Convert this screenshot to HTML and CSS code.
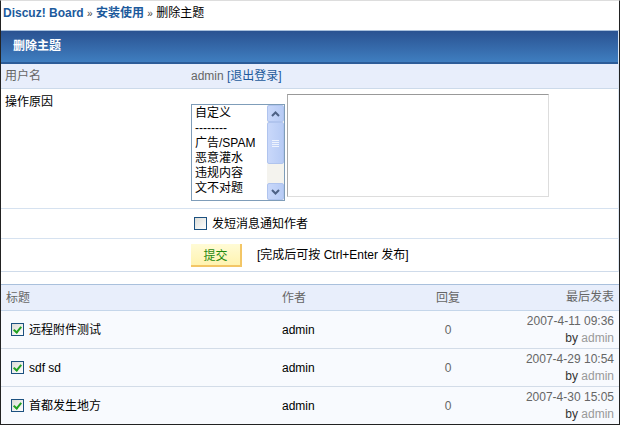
FILE: index.html
```html
<!DOCTYPE html>
<html lang="zh-CN">
<head>
    <meta charset="UTF-8">
    <title>删除主题 - Discuz! Board</title>
    <link rel="stylesheet" href="styles.css">
</head>
<body>
<div class="page">
    <div class="nav">
        <a href="#">Discuz! Board</a> <span class="sep">&raquo;</span> <a href="#">安装使用</a> <span class="sep">&raquo;</span> 删除主题
    </div>

    <div class="box">
        <h3 class="box-title">删除主题</h3>

        <div class="frow alt">
            <div class="flabel gray">用户名</div>
            <div class="fvalue gray">admin <a href="#">[退出登录]</a></div>
        </div>

        <div class="frow reason">
            <div class="flabel">操作原因</div>
            <div class="fvalue reason-fields">
                <div class="listbox">
                    <ul class="options">
                        <li>自定义</li>
                        <li>--------</li>
                        <li>广告/SPAM</li>
                        <li>恶意灌水</li>
                        <li>违规内容</li>
                        <li>文不对题</li>
                    </ul>
                    <div class="scroll">
                        <div class="sbtn">
                            <svg width="9" height="6" viewBox="0 0 9 6"><path d="M1 5 L4.5 1.5 L8 5" fill="none" stroke="#4d6185" stroke-width="2"/></svg>
                        </div>
                        <div class="thumb"><i></i><i></i><i></i><i></i></div>
                        <div class="track"></div>
                        <div class="sbtn">
                            <svg width="9" height="6" viewBox="0 0 9 6"><path d="M1 1 L4.5 4.5 L8 1" fill="none" stroke="#4d6185" stroke-width="2"/></svg>
                        </div>
                    </div>
                </div>
                <textarea class="reason-text"></textarea>
            </div>
        </div>

        <div class="frow check-row">
            <div class="flabel"></div>
            <label class="fvalue check-line">
                <svg class="cb" width="13" height="13" viewBox="0 0 13 13">
                    <defs><linearGradient id="cbg" x1="0" y1="0" x2="1" y2="1"><stop offset="0" stop-color="#dcdcd6"/><stop offset="1" stop-color="#ffffff"/></linearGradient></defs>
                    <rect x="0.5" y="0.5" width="12" height="12" fill="url(#cbg)" stroke="#1c5180"/>
                </svg>
                发短消息通知作者
            </label>
        </div>

        <div class="frow submit-row">
            <div class="flabel"></div>
            <div class="fvalue">
                <button class="btn" type="button">提交</button>
                <span class="hint">[完成后可按 Ctrl+Enter 发布]</span>
            </div>
        </div>
    </div>

    <table class="topics">
        <thead>
            <tr>
                <td class="c-title">标题</td>
                <td class="c-author">作者</td>
                <td class="c-reply">回复</td>
                <td class="c-last">最后发表</td>
            </tr>
        </thead>
        <tbody>
            <tr>
                <td class="c-title"><span class="ck"></span>远程附件测试</td>
                <td class="c-author">admin</td>
                <td class="c-reply">0</td>
                <td class="c-last">2007-4-11 09:36<br><span class="by">by <a href="#">admin</a></span></td>
            </tr>
            <tr>
                <td class="c-title"><span class="ck"></span>sdf sd</td>
                <td class="c-author">admin</td>
                <td class="c-reply">0</td>
                <td class="c-last">2007-4-29 10:54<br><span class="by">by <a href="#">admin</a></span></td>
            </tr>
            <tr>
                <td class="c-title"><span class="ck"></span>首都发生地方</td>
                <td class="c-author">admin</td>
                <td class="c-reply">0</td>
                <td class="c-last">2007-4-30 15:05<br><span class="by">by <a href="#">admin</a></span></td>
            </tr>
        </tbody>
    </table>
</div>
</body>
</html>
```

FILE: styles.css
```css
*{
    margin: 0;
    padding: 0;
    box-sizing: border-box;
}
body{
    font: 12px/16px "Liberation Sans", "Noto Sans CJK SC", sans-serif;
    color: #000;
    background: #fff;
}
a{
    color: #1c5a9c;
    text-decoration: none;
}
ul{
    list-style: none;
}
.page{
    width: 620px;
    height: 425px;
    border: 1px solid #222;
    border-top-color: #ddd;
    overflow: hidden;
}
.nav{
    height: 29px;
    padding: 4px 2px 2px;
}
.nav a{
    font-weight: bold;
}
.sep{
    font-size: 10px;
    color: #444;
}

/* 表单 */
.box{
    border-top: 1px solid #a9c0dc;
    border-right: 1px solid #dfe8f3;
}
.box-title{
    height: 33px;
    padding: 0 12px;
    line-height: 31px;
    font-size: 12px;
    color: #fff;
    background: linear-gradient(#2a5291, #3f7ec0);
    border-bottom: 2px solid #2c5c98;
}
.frow{
    display: flex;
    border-bottom: 1px solid #d6e2f0;
}
.frow.alt{
    height: 25px;
    align-items: center;
    background: #e8eefb;
    border-bottom-color: #ccdaea;
}
.flabel{
    width: 190px;
    flex-shrink: 0;
    padding-left: 4px;
}
.gray{
    color: #666;
}
.reason{
    height: 120px;
    padding-top: 5px;
}
.reason-fields{
    display: flex;
    align-items: flex-start;
    gap: 3px;
}
.listbox{
    display: flex;
    width: 94px;
    height: 97px;
    margin-top: 10px;
    border: 1px solid #7f9db9;
    background: #fff;
}
.options{
    flex: 1;
    padding: 1px 0 0 3px;
    line-height: 15px;
    overflow: hidden;
}
.scroll{
    width: 17px;
    display: flex;
    flex-direction: column;
    background: #f4f3ee;
}
.sbtn,
.thumb{
    height: 17px;
    display: flex;
    align-items: center;
    justify-content: center;
    background: linear-gradient(90deg, #c9d8fa, #b7cbf5);
    border: 1px solid #b0c4ee;
    border-radius: 2px;
}
.thumb{
    height: 42px;
    flex-direction: column;
    gap: 1px;
}
.thumb i{
    display: block;
    width: 7px;
    height: 1px;
    background: #eef3fd;
}
.track{
    flex: 1;
}
.reason-text{
    width: 262px;
    height: 103px;
    margin-left: -1px;
    border: 1px solid #ddd;
    border-top-color: #999;
    border-left-color: #aaa;
    resize: none;
    outline: none;
}
.check-row{
    height: 30px;
    align-items: center;
}
.check-line{
    display: flex;
    align-items: center;
    gap: 5px;
    padding-left: 3px;
}
.submit-row{
    height: 33px;
    align-items: center;
    border-bottom-color: #cfdbea;
}
.submit-row .fvalue{
    display: flex;
    align-items: center;
}
.btn{
    width: 51px;
    height: 23px;
    font: 12px "Liberation Sans", "Noto Sans CJK SC", sans-serif;
    color: #1f8a10;
    background: linear-gradient(#fffbd6, #fff3b0);
    border: 0;
    border-right: 2px solid #f3c666;
    border-bottom: 2px solid #f3c666;
}
.hint{
    margin-left: 15px;
}

/* 主题列表 */
.topics{
    width: 100%;
    margin-top: 12px;
    border-collapse: collapse;
    border-top: 1px solid #a9c0dc;
}
.topics td{
    padding: 0 5px;
    border-bottom: 1px solid #d3dce8;
}
.topics thead td{
    height: 26px;
    color: #666;
    background: #e8eefb;
    border-bottom-color: #c5d6ea;
}
.topics tbody td{
    height: 38px;
    background: #f8fafe;
}
.c-title{
    width: 276px;
}
.c-author{
    width: 125px;
}
.c-reply{
    width: 92px;
    text-align: center;
}
.topics tbody .c-reply{
    color: #666;
}
.c-last{
    text-align: right;
    color: #666;
    line-height: 17px;
}
.by{
    color: #333;
}
.by a{
    color: #999;
}
.ck{
    display: inline-block;
    width: 13px;
    height: 13px;
    margin: 0 5px 0 5px;
    vertical-align: -2px;
    border: 1px solid #1c5180;
    background: linear-gradient(135deg, #dcdcd6, #fff);
    position: relative;
}
.ck::after{
    content: "";
    position: absolute;
    left: 3px;
    top: 1px;
    width: 3px;
    height: 6px;
    border: solid #21a121;
    border-width: 0 2px 2px 0;
    transform: rotate(40deg);
}
```
